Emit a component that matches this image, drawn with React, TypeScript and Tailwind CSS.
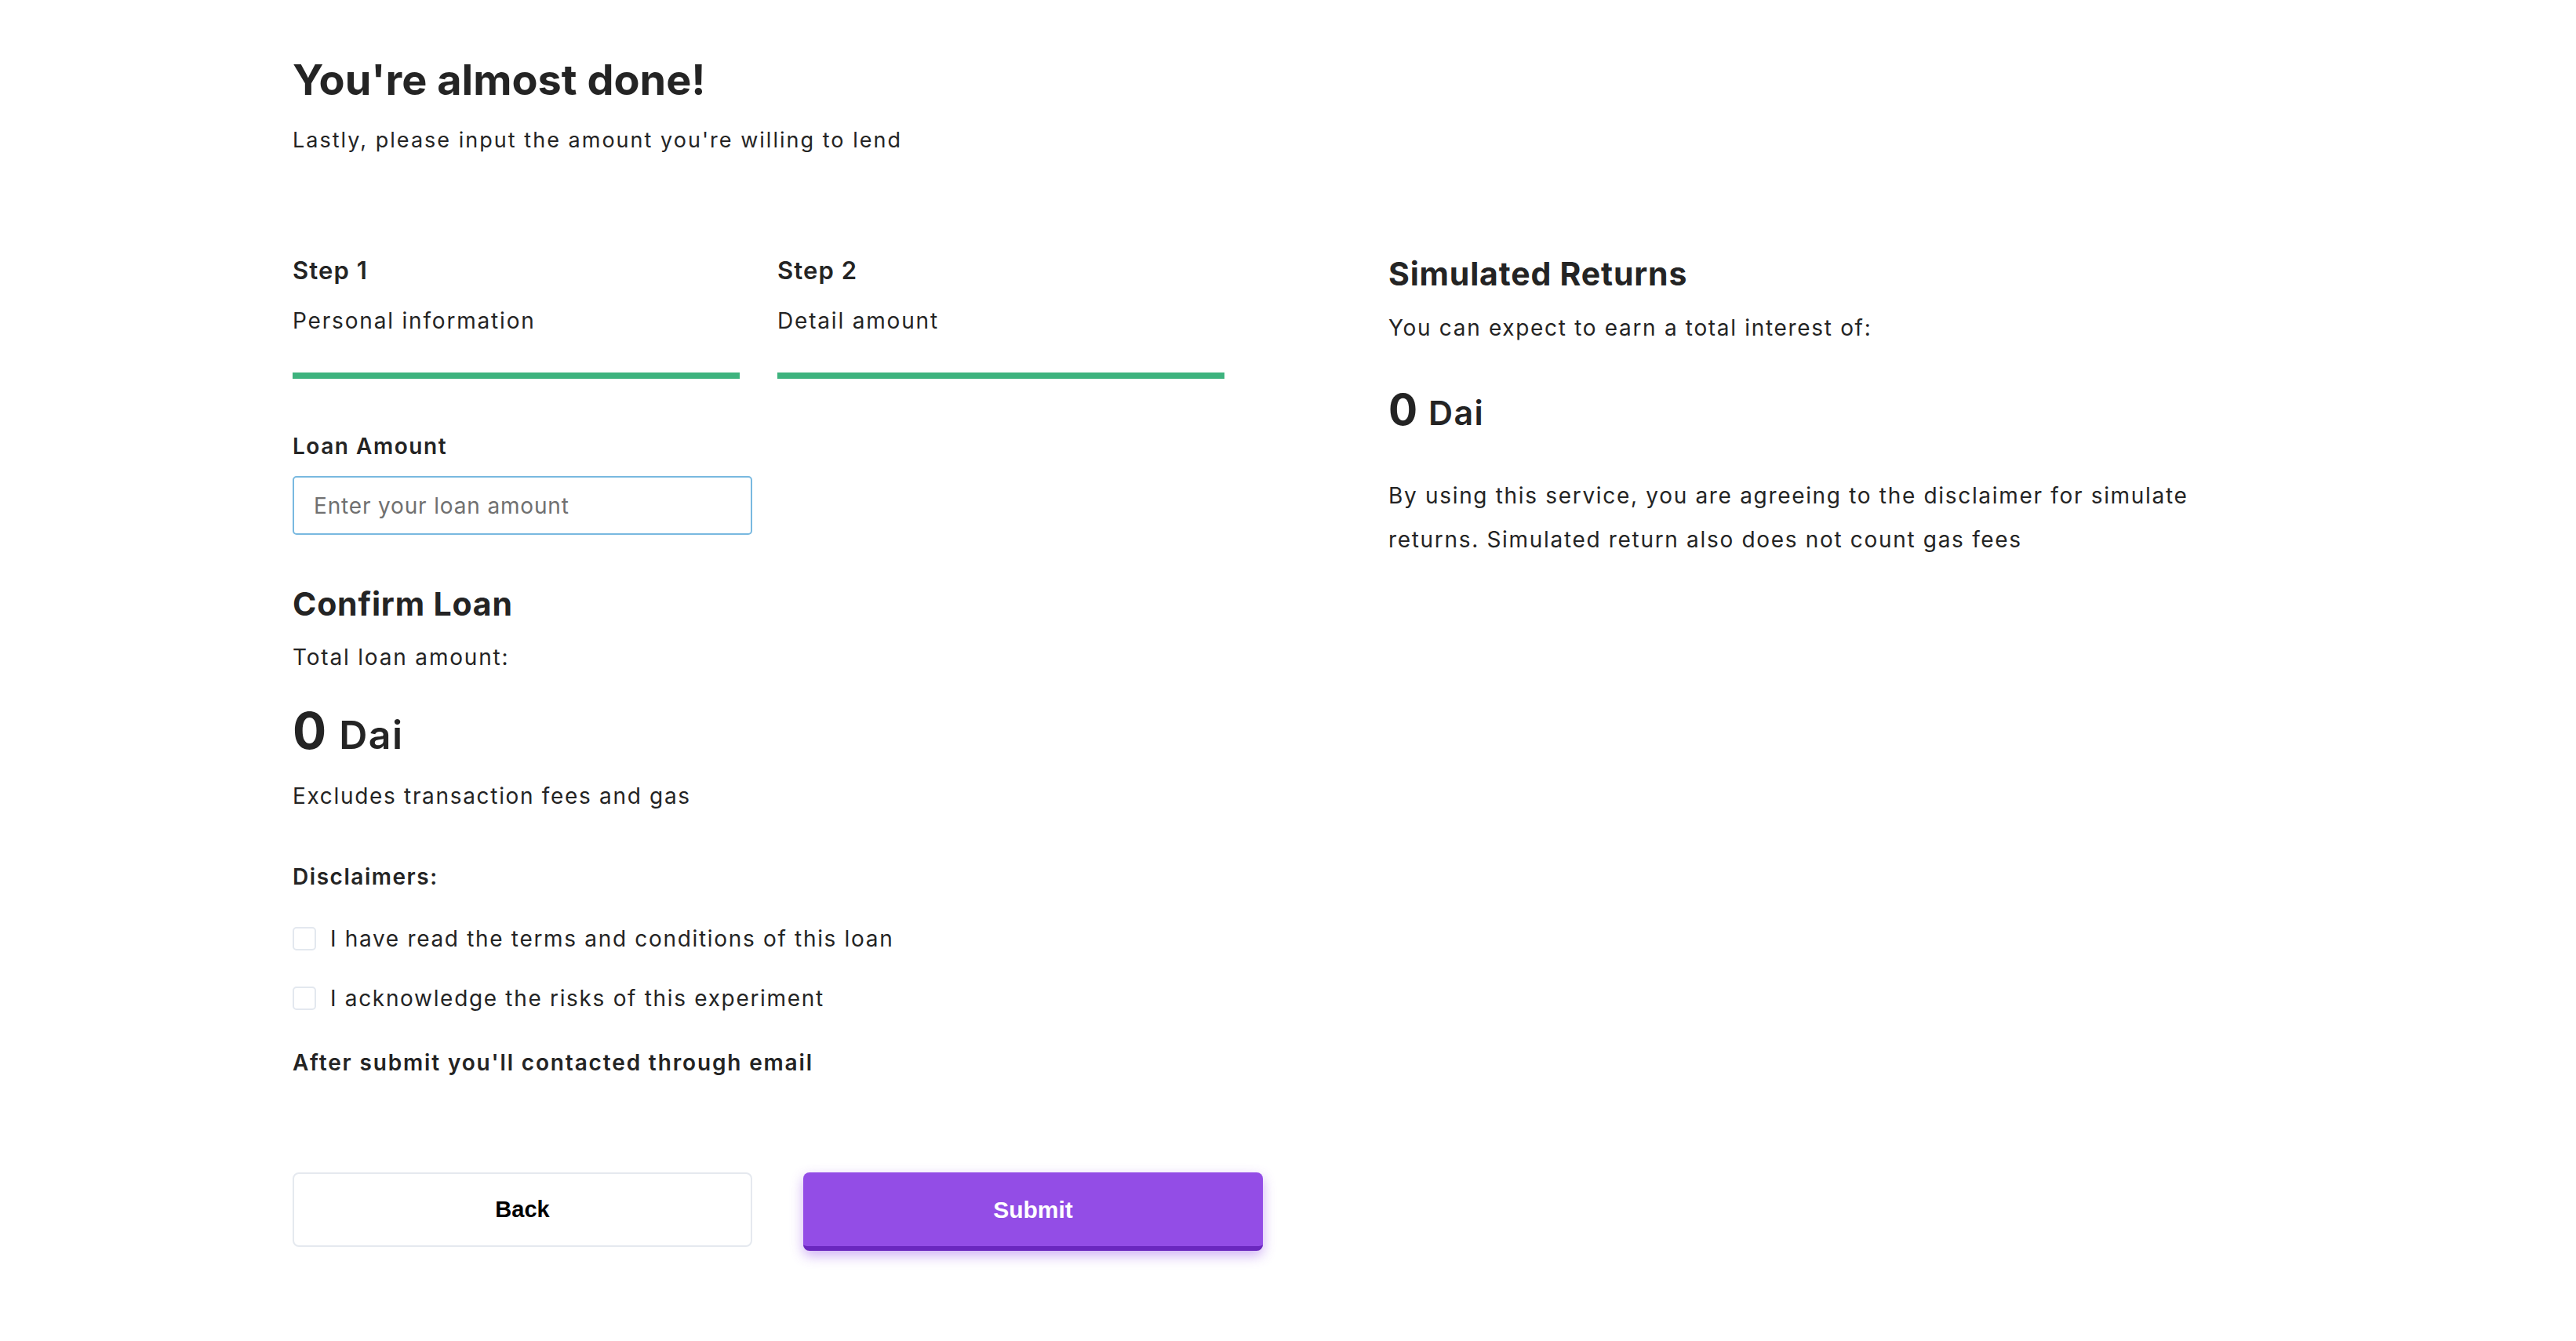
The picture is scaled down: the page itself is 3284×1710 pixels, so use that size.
import { useState } from "react";

function Step({ title, desc }: { title: string; desc: string }) {
  return (
    <div className="w-[570px]">
      <div className="text-[31px] leading-[40px] font-semibold tracking-[0.035em]">{title}</div>
      <div className="mt-[26px] text-[28px] leading-[36px] tracking-[0.065em]">{desc}</div>
      <div className="mt-[48px] h-[8px] bg-[#3EB37E]" />
    </div>
  );
}

function Check({ label }: { label: string }) {
  const [on, setOn] = useState(false);
  return (
    <label className="flex items-center gap-[18px] h-[36px] cursor-pointer">
      <input
        type="checkbox"
        checked={on}
        onChange={() => setOn(!on)}
        className="appearance-none w-[30px] h-[30px] rounded-[5px] border-2 border-[#E3E8EF] bg-white checked:bg-[#934DE6]"
      />
      <span className="text-[28px] leading-[36px] tracking-[0.06em]">{label}</span>
    </label>
  );
}

export default function App() {
  const [amount, setAmount] = useState("");
  const value = Number(amount) || 0;

  return (
    <div className="min-h-screen bg-white text-[#242424] font-['Inter','Liberation_Sans',sans-serif]">
      <div className="pl-[373px] pt-[70px] pb-[100px]">
        {/* HEADER */}
        <h1 className="text-[54px] leading-[64px] font-bold">You're almost done!</h1>
        <p className="mt-[27px] text-[27px] leading-[36px] tracking-[0.075em]">
          Lastly, please input the amount you're willing to lend
        </p>

        <div className="mt-[128px] flex">
          {/* LEFT COLUMN */}
          <div className="w-[1269px] shrink-0">
            <div className="flex gap-[48px]">
              <Step title="Step 1" desc="Personal information" />
              <Step title="Step 2" desc="Detail amount" />
            </div>

            <div className="mt-[68px] text-[28px] leading-[36px] font-semibold tracking-[0.055em]">Loan Amount</div>
            <input
              value={amount}
              onChange={(e) => setAmount(e.target.value)}
              placeholder="Enter your loan amount"
              className="mt-[20px] block w-[586px] h-[75px] px-[25px] rounded-[5px] border-2 border-[#79B9E0] text-[28px] tracking-[0.03em] outline-none placeholder:text-[#707070]"
            />

            <h2 className="mt-[64px] text-[41px] leading-[48px] font-bold tracking-[0.02em]">Confirm Loan</h2>
            <p className="mt-[26px] text-[28px] leading-[36px] tracking-[0.065em]">Total loan amount:</p>
            <div className="mt-[40px] flex items-baseline gap-[16px] h-[72px] leading-[72px]">
              <span className="text-[64px] font-bold">{value}</span>
              <span className="text-[50px] font-semibold tracking-[0.03em]">Dai</span>
            </div>
            <p className="mt-[29px] text-[28px] leading-[36px] tracking-[0.06em]">Excludes transaction fees and gas</p>

            <div className="mt-[67px] text-[28px] leading-[36px] font-semibold tracking-[0.055em]">Disclaimers:</div>
            <div className="mt-[43px]">
              <Check label="I have read the terms and conditions of this loan" />
            </div>
            <div className="mt-[40px]">
              <Check label="I acknowledge the risks of this experiment" />
            </div>
            <p className="mt-[46px] text-[28px] leading-[36px] font-semibold tracking-[0.066em]">
              After submit you'll contacted through email
            </p>

            <div className="mt-[122px] flex gap-[65px] font-['Liberation_Sans',sans-serif]">
              <button className="w-[586px] h-[95px] rounded-[8px] border-2 border-[#E5E9EF] bg-white text-[29px] font-bold text-black">
                Back
              </button>
              <button className="w-[586px] h-[100px] rounded-[8px] bg-[#934DE6] border-b-[6px] border-[#6A27BF] text-[30px] font-bold text-white shadow-[0_6px_16px_rgba(147,77,230,0.45)]">
                Submit
              </button>
            </div>
          </div>

          {/* RIGHT COLUMN */}
          <div className="ml-[128px] w-[1080px]">
            <h2 className="text-[41px] leading-[48px] font-bold tracking-[0.02em]">Simulated Returns</h2>
            <p className="mt-[27px] text-[28px] leading-[36px] tracking-[0.06em]">
              You can expect to earn a total interest of:
            </p>
            <div className="mt-[54px] flex items-baseline gap-[14px] h-[64px] leading-[64px]">
              <span className="text-[55px] font-bold">{value * 0}</span>
              <span className="text-[43px] font-semibold tracking-[0.03em]">Dai</span>
            </div>
            <p className="mt-[50px] text-[28px] leading-[56px] tracking-[0.06em]">
              By using this service, you are agreeing to the disclaimer for simulate returns.
              Simulated return also does not count gas fees
            </p>
          </div>
        </div>
      </div>
    </div>
  );
}
